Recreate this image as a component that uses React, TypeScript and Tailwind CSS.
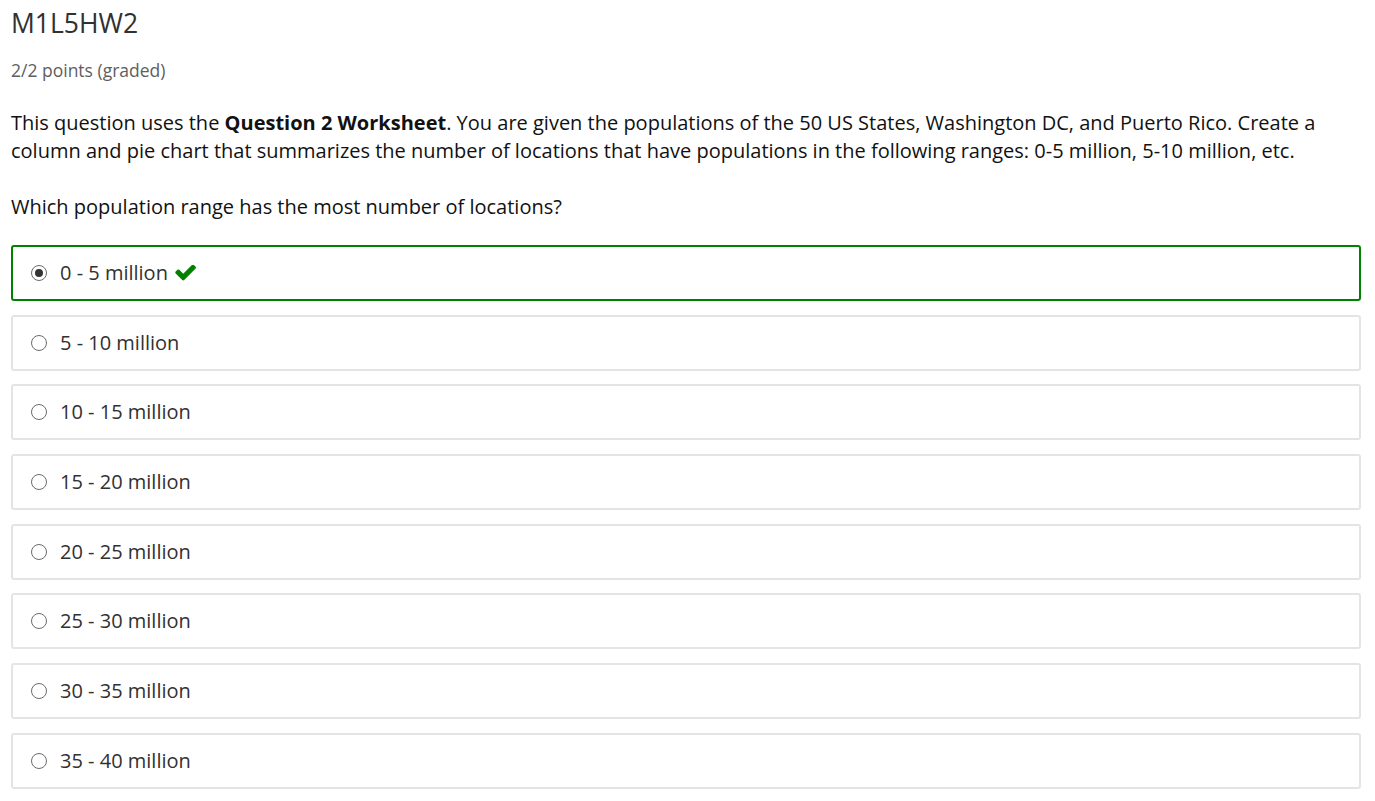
const options = ['0 - 5 million', '5 - 10 million', '10 - 15 million', '15 - 20 million', '20 - 25 million', '25 - 30 million', '30 - 35 million', '35 - 40 million'];

function CheckMark() {
  return (
    <svg viewBox="100 400 1572 1130" className="ml-[7px] w-[21px] h-[16px] text-[#008100]" fill="currentColor">
      <path d="M1671 566q0 40-28 68l-724 724-136 136q-28 28-68 28t-68-28l-136-136-362-362q-28-28-28-68t28-68l136-136q28-28 68-28t68 28l294 295 656-657q28-28 68-28t68 28l136 136q28 28 28 68z" />
    </svg>
  );
}

export default function App() {
  return (
    <div className="min-h-screen bg-white px-[11px] pt-[6px] text-[#313131]" style={{ fontFamily: '"Open Sans", sans-serif' }}>
      <h2 className="text-[26.5px] leading-[34px] text-[#313131]">M1L5HW2</h2>
      <div className="mt-[20px] text-[17.5px] leading-[20px] text-[#5e5e5e]">2/2 points (graded)</div>
      <div className="mt-[29px] text-[20px] leading-[28px] text-[#111]">
        <p>This question uses the <b>Question 2 Worksheet</b>. You are given the populations of the 50 US States, Washington DC, and Puerto Rico. Create a column and pie chart that summarizes the number of locations that have populations in the following ranges: 0-5 million, 5-10 million, etc.</p>
        <p className="mt-[28px]">Which population range has the most number of locations?</p>
      </div>
      <div className="mt-[24px] w-[1350px] flex flex-col gap-[13.7px]">
        {options.map((o, i) => {
          const sel = i === 0;
          return (
            <label key={o} className={`flex items-center h-[56px] rounded-[3px] border-2 pl-[18px] ${sel ? 'border-[#008100]' : 'border-[#e4e4e4]'}`}>
              <span className="w-[16px] h-[16px] rounded-full border-[1.5px] border-[#6b6b6b] flex items-center justify-center bg-white">
                {sel && <span className="w-[8px] h-[8px] rounded-full bg-[#333]" />}
              </span>
              <span className="ml-[13px] text-[20px] text-[#313131]">{o}</span>
              {sel && <CheckMark />}
            </label>
          );
        })}
      </div>
    </div>
  );
}
